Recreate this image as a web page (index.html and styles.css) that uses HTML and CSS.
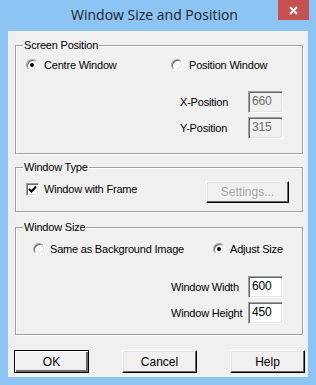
FILE: index.html
```html
<!DOCTYPE html>
<html lang="en">

<head>
    <meta charset="UTF-8">
    <meta name="viewport" content="width=device-width, initial-scale=1.0">
    <title>Window Size and Position</title>

    <link rel="stylesheet" href="styles.css">
</head>

<body>

    <div class="window">

        <div class="titlebar">
            <span class="title">Window Size and Position</span>
            <span class="close">
                <svg width="9" height="9" viewBox="0 0 9 9">
                    <path d="M1 1 L8 8 M8 1 L1 8" stroke="#fff" stroke-width="2" fill="none" />
                </svg>
            </span>
        </div>

        <div class="client">

            <div class="group group-position">
                <span class="group-label">Screen Position</span>

                <div class="options">
                    <label class="option"><span class="radio checked"></span>Centre Window</label>
                    <label class="option"><span class="radio"></span>Position Window</label>
                </div>

                <div class="fields">
                    <span>X-Position</span>
                    <span class="edit disabled">660</span>
                    <span>Y-Position</span>
                    <span class="edit disabled">315</span>
                </div>
            </div>

            <div class="group group-type">
                <span class="group-label">Window Type</span>

                <div class="type-row">
                    <label class="option check-option">
                        <span class="checkbox">
                            <svg width="9" height="9" viewBox="0 0 9 9">
                                <path d="M1 4 L3.5 6.5 L8 1.5" stroke="#000" stroke-width="2" fill="none" />
                            </svg>
                        </span>
                        Window with Frame
                    </label>
                    <button class="btn" disabled>Settings...</button>
                </div>
            </div>

            <div class="group group-size">
                <span class="group-label">Window Size</span>

                <div class="options">
                    <label class="option"><span class="radio"></span>Same as Background Image</label>
                    <label class="option"><span class="radio checked"></span>Adjust Size</label>
                </div>

                <div class="fields">
                    <span>Window Width</span>
                    <span class="edit">600</span>
                    <span>Window Height</span>
                    <span class="edit">450</span>
                </div>
            </div>

            <div class="buttons">
                <button class="btn default">OK</button>
                <button class="btn">Cancel</button>
                <button class="btn">Help</button>
            </div>

        </div>

    </div>

</body>

</html>
```

FILE: styles.css
```css
* {
    margin: 0;
    padding: 0;
    box-sizing: border-box;
}

body {
    background-color: #8cc4f4;
    font-family: "Liberation Sans", Arial, sans-serif;
    font-size: 11px;
    letter-spacing: -0.2px;
    color: #000;
}

.window {
    width: 316px;
    height: 385px;
    background-color: #8cc4f4;
    display: flex;
    flex-direction: column;
}

/* barra de titulo estilo windows 8 */
.titlebar {
    height: 31px;
    display: grid;
    grid-template-columns: 1fr auto 1fr;
    padding-right: 7px;
}

.title {
    grid-column: 2;
    font-family: "Open Sans", "Noto Sans", sans-serif;
    font-size: 14px;
    letter-spacing: 0;
    color: #222;
    line-height: 30px;
}

.close {
    grid-column: 3;
    justify-self: end;
    width: 31px;
    height: 20px;
    background-color: #c75050;
    display: flex;
    align-items: center;
    justify-content: center;
}

.client {
    margin: 0 8px;
    height: 346px;
    background-color: #f0f0f0;
    padding: 14px 0 0 7px;
}

/* group box com linha "etched" */
.group {
    position: relative;
    width: 288px;
    border: 1px solid #a0a0a0;
    box-shadow: inset 1px 1px 0 #fff, 1px 1px 0 #fff;
}

.group-label {
    position: absolute;
    top: -8px;
    left: 7px;
    padding: 0 1px;
    line-height: 14px;
    background-color: #f0f0f0;
}

.group-position {
    height: 109px;
    padding: 12px 0 0 10px;
    margin-bottom: 13px;
}

.group-type {
    height: 45px;
    padding: 13px 0 0 10px;
    margin-bottom: 15px;
}

.group-size {
    height: 108px;
    padding: 14px 0 0 17px;
}

.options {
    display: flex;
}

.option {
    flex: none;
    display: flex;
    align-items: center;
    gap: 6px;
    line-height: 14px;
    width: 145px;
    white-space: nowrap;
}

.option:last-child {
    width: auto;
}

.group-size .option {
    gap: 5px;
}

.group-size .option:first-child {
    width: 180px;
}

.radio {
    width: 12px;
    height: 12px;
    border-radius: 50%;
    background-color: #fff;
    border: 1px solid;
    border-color: #a0a0a0 #fff #fff #a0a0a0;
    box-shadow: inset 1px 1px 0 #696969, inset -1px -1px 0 #e3e3e3;
    display: flex;
    align-items: center;
    justify-content: center;
}

.radio.checked::after {
    content: "";
    width: 4px;
    height: 4px;
    border-radius: 50%;
    background-color: #000;
}

.fields {
    display: grid;
    grid-template-columns: 68px 35px;
    grid-auto-rows: 22px;
    row-gap: 4px;
    align-items: center;
    margin: 19px 0 0 154px;
}

.group-size .fields {
    grid-template-columns: 77px 35px;
    margin: 20px 0 0 138px;
}

.edit {
    height: 22px;
    padding: 2px 0 0 3px;
    line-height: 14px;
    background-color: #fff;
    border: 1px solid;
    border-color: #a0a0a0 #fff #fff #a0a0a0;
    box-shadow: inset 1px 1px 0 #696969, inset -1px -1px 0 #e3e3e3;
    font-size: 12px;
}

.edit.disabled {
    background-color: #f0f0f0;
    color: #6d6d6d;
}

.type-row {
    display: flex;
    align-items: flex-start;
}

.check-option {
    width: 180px;
    gap: 5px;
    margin-top: 1px;
}

.checkbox {
    width: 13px;
    height: 13px;
    background-color: #fff;
    border: 1px solid;
    border-color: #a0a0a0 #fff #fff #a0a0a0;
    box-shadow: inset 1px 1px 0 #696969, inset -1px -1px 0 #e3e3e3;
    display: flex;
    align-items: center;
    justify-content: center;
}

/* botoes classicos em relevo */
.btn {
    width: 75px;
    height: 23px;
    font-family: inherit;
    font-size: 12px;
    letter-spacing: 0;
    color: #000;
    background-color: #f0f0f0;
    border: 1px solid;
    border-color: #fff #000 #000 #fff;
    box-shadow: inset -1px -1px 0 #696969, inset 1px 1px 0 #e3e3e3;
}

.btn:disabled {
    width: 83px;
    height: 22px;
    color: #a0a0a0;
    text-shadow: 1px 1px 0 #fff;
}

.btn.default {
    border: 1px solid #000;
    box-shadow: inset 1px 1px 0 #fff, inset -2px -2px 0 #696969;
}

.buttons {
    display: flex;
    gap: 33px;
    margin: 15px 0 0 -1px;
}
```
